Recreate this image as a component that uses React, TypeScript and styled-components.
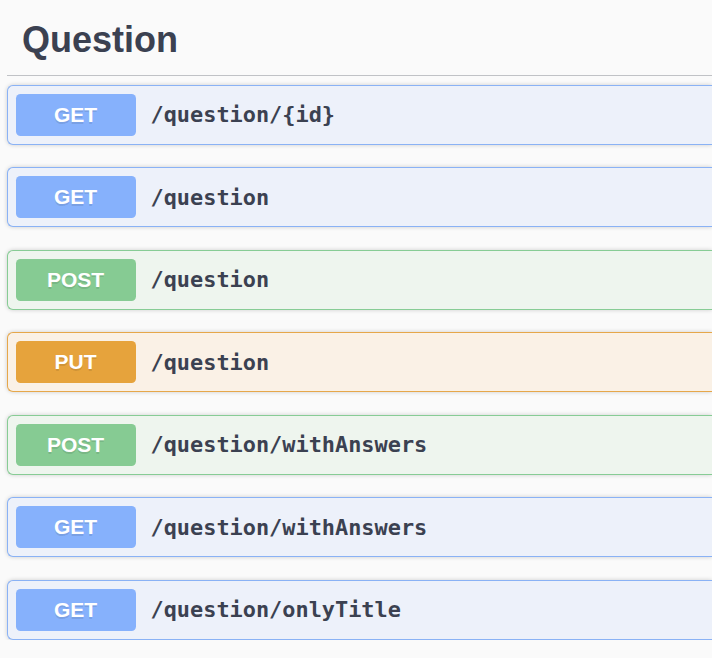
import React from "react";
import styled, { createGlobalStyle } from "styled-components";

const GlobalStyle = createGlobalStyle`
  html, body {
    margin: 0;
    padding: 0;
    background: #fafafa;
    overflow: hidden;
  }
`;

type Method = "GET" | "POST" | "PUT";

const palette: Record<Method, { badge: string; bg: string; border: string }> = {
  GET: { badge: "#86b1fc", bg: "#edf1fa", border: "#8ab2f5" },
  POST: { badge: "#86cb93", bg: "#eef5ee", border: "#87cc95" },
  PUT: { badge: "#e6a33c", bg: "#faf1e6", border: "#e6a74a" },
};

const Page = styled.div`
  width: 100%;
  padding: 5px 0 0 7px;
  box-sizing: border-box;
`;

const TagTitle = styled.h3`
  margin: 0 0 8.5px 0;
  padding: 15px 30px 15px 15px;
  font-family: "Liberation Sans", Arial, sans-serif;
  font-size: 36px;
  line-height: 40px;
  font-weight: 700;
  color: #3b4151;
  border-bottom: 1.5px solid rgba(59, 65, 81, 0.3);
`;

const List = styled.div`
  display: flex;
  flex-direction: column;
  gap: 22.5px;
`;

const Block = styled.div<{ $method: Method }>`
  display: flex;
  align-items: center;
  height: 60px;
  box-sizing: border-box;
  padding: 7.5px;
  border: 1.5px solid ${(p) => palette[p.$method].border};
  border-right: 0;
  border-radius: 6px 0 0 6px;
  background: ${(p) => palette[p.$method].bg};
  box-shadow: 0 0 4.5px rgba(0, 0, 0, 0.19);
`;

const Badge = styled.span<{ $method: Method }>`
  display: flex;
  align-items: center;
  justify-content: center;
  width: 120px;
  height: 42px;
  flex-shrink: 0;
  border-radius: 4.5px;
  background: ${(p) => palette[p.$method].badge};
  color: #fff;
  font-family: "Liberation Sans", Arial, sans-serif;
  font-weight: 700;
  font-size: 21px;
  text-shadow: 0 1.5px 0 rgba(0, 0, 0, 0.1);
`;

const Path = styled.span`
  padding: 0 15px;
  font-family: "DejaVu Sans Mono", monospace;
  font-weight: 700;
  font-size: 21.9px;
  color: #3b4151;
`;

const ops: { method: Method; path: string }[] = [
  { method: "GET", path: "/question/{id}" },
  { method: "GET", path: "/question" },
  { method: "POST", path: "/question" },
  { method: "PUT", path: "/question" },
  { method: "POST", path: "/question/withAnswers" },
  { method: "GET", path: "/question/withAnswers" },
  { method: "GET", path: "/question/onlyTitle" },
];

export default function App() {
  return (
    <>
      <GlobalStyle />
      <Page>
        <TagTitle>Question</TagTitle>
        <List>
          {ops.map((op, i) => (
            <Block key={i} $method={op.method}>
              <Badge $method={op.method}>{op.method}</Badge>
              <Path>{op.path}</Path>
            </Block>
          ))}
        </List>
      </Page>
    </>
  );
}
